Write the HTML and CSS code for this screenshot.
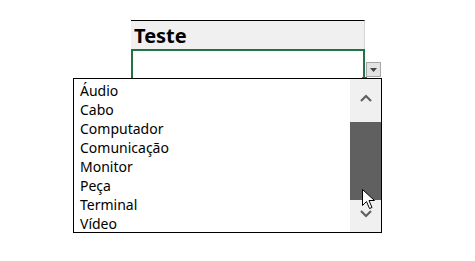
FILE: index.html
```html
<!DOCTYPE html>
<html lang="pt">
<head>
<meta charset="utf-8">
<link rel="stylesheet" href="styles.css">
</head>
<body>
<div class="sheet">
  <div class="header">Teste</div>
  <div class="cell"><span class="handle"></span></div>
</div>
<div class="dropbtn"><svg width="7" height="4" viewBox="0 0 7 4"><path d="M0 0h7L3.5 4z" fill="#444"/></svg></div>
<div class="list">
  <ul class="items">
    <li>Áudio</li>
    <li>Cabo</li>
    <li>Computador</li>
    <li>Comunicação</li>
    <li>Monitor</li>
    <li>Peça</li>
    <li>Terminal</li>
    <li>Vídeo</li>
  </ul>
  <div class="scroll">
    <svg class="arrow" width="12" height="8" viewBox="0 0 12 8"><path d="M1 7L6 2l5 5" fill="none" stroke="#606060" stroke-width="2.2"/></svg>
    <div class="thumb"></div>
    <svg class="arrow down" width="12" height="8" viewBox="0 0 12 8"><path d="M1 1l5 5 5-5" fill="none" stroke="#606060" stroke-width="2.2"/></svg>
  </div>
</div>
<svg class="cursor" width="13" height="21" viewBox="0 0 13 21"><path d="M0.5 0.5V16.5L4.5 12.5L7.5 19.5L10 18.5L7 11.5H12.5Z" fill="#fff" stroke="#000" stroke-width="1" stroke-linejoin="miter"/></svg>
</body>
</html>
```
FILE: styles.css
```css
html, body {
  margin: 0;
  padding: 0;
  background: #fff;
  width: 475px;
  height: 261px;
  overflow: hidden;
  font-family: "Noto Sans", "Liberation Sans", sans-serif;
}
.sheet {
  padding: 20px 0 0 131px;
}
.header {
  width: 230px;
  height: 28px;
  border-top: 1px solid #000;
  border-right: 1px solid #d4d4d4;
  background: #f0f0f0;
  font-weight: 700;
  font-size: 20px;
  line-height: 30px;
  padding-left: 3px;
  color: #000;
}
.cell {
  position: relative;
  width: 230px;
  height: 40px;
  border: 2px solid #217346;
  border-bottom: none;
}
.handle {
  position: absolute;
  right: -4px;
  top: 26px;
  width: 5px;
  height: 5px;
  background: #217346;
}
.dropbtn {
  position: absolute;
  left: 366px;
  top: 62px;
  width: 13px;
  height: 13px;
  border: 1px solid #a6a6a6;
  background: #e3e3e3;
  display: flex;
  align-items: center;
  justify-content: center;
}
.list {
  position: absolute;
  left: 73px;
  top: 78px;
  width: 307px;
  height: 153px;
  border: 1px solid #000;
  background: #fff;
  display: flex;
}
.items {
  list-style: none;
  margin: 0;
  padding: 2px 0 0 6px;
  flex: 1;
  font-size: 14px;
  line-height: 19px;
  color: #000;
}
.scroll {
  width: 31px;
  background: #f0f0f0;
  display: flex;
  flex-direction: column;
  align-items: center;
}
.arrow {
  margin-top: 15px;
  margin-bottom: 20px;
}
.thumb {
  width: 31px;
  height: 78px;
  background: #606060;
}
.arrow.down {
  margin-top: 10px;
  margin-bottom: 0;
}
.cursor {
  position: absolute;
  left: 362px;
  top: 189px;
}
```
